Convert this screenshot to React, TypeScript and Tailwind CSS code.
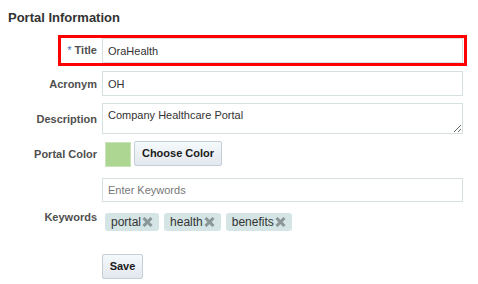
import React from 'react';

const keywords = ['portal', 'health', 'benefits'];

const Label = ({ children }: { children: React.ReactNode }) => (
  <div className="w-[97px] shrink-0 text-right text-[11px] leading-[14px] font-bold text-[#4f4f4f]">{children}</div>
);

const XIcon = () => (
  <svg width="11" height="10" viewBox="0 0 11 10" className="ml-[1px]">
    <path d="M1.5 1 L9.5 9 M9.5 1 L1.5 9" stroke="#8b9696" strokeWidth="3" strokeLinecap="butt" />
  </svg>
);

const App = () => {
  return (
    <div className="w-[478px] h-[284px] bg-white font-['Liberation_Sans',Arial,sans-serif] text-[#333]">
      <h2 className="pt-[10px] pl-[8px] text-[13px] leading-[16px] font-bold text-[#333]">Portal Information</h2>

      <div className="mt-[9px] ml-[58px] w-[409px] h-[31px] border-[3px] border-[#ff0000] flex items-center">
        <div className="w-[36px] shrink-0 text-right text-[11px] font-bold text-[#4f4f4f]">
          <span className="text-[#3a6fb0] font-normal">*</span> Title
        </div>
        <input
          readOnly
          value="OraHealth"
          className="ml-[5px] w-[361px] h-[25px] border border-[#d6e0e0] px-[5px] text-[11px] text-[#333] outline-none"
        />
      </div>

      <div className="mt-[5px] flex items-center">
        <Label>Acronym</Label>
        <input
          readOnly
          value="OH"
          className="ml-[5px] w-[361px] h-[25px] border border-[#d6e0e0] px-[5px] text-[11px] text-[#333] outline-none"
        />
      </div>

      <div className="mt-[7px] flex items-center">
        <Label>Description</Label>
        <textarea
          readOnly
          value="Company Healthcare Portal"
          className="ml-[5px] w-[361px] h-[31px] border border-[#d6e0e0] px-[5px] pt-[4px] text-[11px] leading-[14px] text-[#333] outline-none block"
        />
      </div>

      <div className="mt-[7px] flex items-start">
        <div className="pt-[6px]">
          <Label>Portal Color</Label>
        </div>
        <div className="ml-[8px] w-[26px] h-[25px] mt-[1px] bg-[#acd692] border border-[#c9e3b8]" />
        <button className="ml-[3px] w-[88px] h-[25px] border border-[#c4ced7] rounded-[2px] bg-gradient-to-b from-[#f4f9fb] to-[#e4e8ef] text-[11px] font-bold text-[#1a1a1a]">
          Choose Color
        </button>
      </div>

      <div className="mt-[11px] flex">
        <div className="w-[97px] shrink-0" />
        <input
          readOnly
          placeholder="Enter Keywords"
          className="ml-[5px] w-[361px] h-[24px] border border-[#d6e0e0] px-[5px] text-[11px] placeholder:text-[#777] outline-none"
        />
      </div>

      <div className="mt-[8px] flex items-start">
        <Label>Keywords</Label>
        <div className="ml-[8px] mt-[3px] flex gap-[5px]">
          {keywords.map((k) => (
            <div
              key={k}
              className="h-[18px] flex items-center rounded-[3px] bg-[#d5e5e5] pl-[6px] pr-[6px] text-[12px] text-[#333]"
            >
              {k}
              <XIcon />
            </div>
          ))}
        </div>
      </div>

      <div className="mt-[22px] ml-[102px]">
        <button className="w-[41px] h-[25px] border border-[#c4ced7] rounded-[2px] bg-gradient-to-b from-[#f4f9fb] to-[#e4e8ef] text-[11px] font-bold text-[#1a1a1a]">
          Save
        </button>
      </div>
    </div>
  );
};

export default App;
